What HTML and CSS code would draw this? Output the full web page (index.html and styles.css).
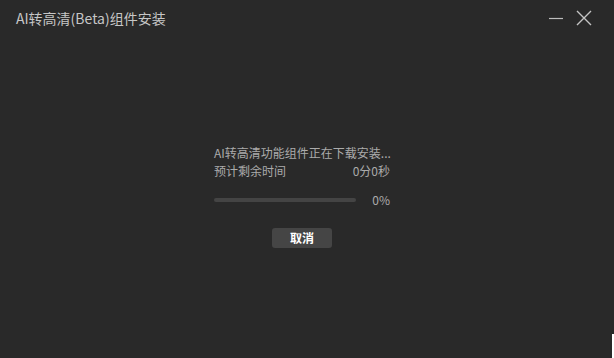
FILE: index.html
```html
<!DOCTYPE html>
<html lang="zh-CN">
<head>
<meta charset="utf-8">
<link rel="stylesheet" href="styles.css">
</head>
<body>
<div class="window">
  <div class="titlebar">
    <div class="title">AI转高清(Beta)组件安装</div>
    <div class="controls">
      <svg class="icon-min" width="15" height="15" viewBox="0 0 15 15"><line x1="0" y1="7.5" x2="14" y2="7.5" stroke="#bdbdbd" stroke-width="1.2"/></svg>
      <svg class="icon-close" width="16" height="16" viewBox="0 0 16 16"><path d="M1 1 L15 15 M15 1 L1 15" stroke="#c4c4c4" stroke-width="1.4" fill="none"/></svg>
    </div>
  </div>
  <div class="main">
    <div class="panel">
      <div class="line">AI转高清功能组件正在下载安装...</div>
      <div class="line split"><span>预计剩余时间</span><span>0分0秒</span></div>
      <div class="progress-row">
        <div class="bar"><div class="fill" style="width:0%"></div></div>
        <span class="pct">0%</span>
      </div>
      <div class="actions"><button class="btn">取消</button></div>
    </div>
  </div>
  <div class="grip"></div>
</div>
</body>
</html>
```
FILE: styles.css
```css
* { box-sizing: border-box; }
html, body { margin: 0; padding: 0; background: #ffffff; }
body {
  font-family: "Noto Sans CJK SC", "Noto Sans", sans-serif;
}
.window {
  position: relative;
  width: 614px;
  height: 358px;
  background: #292929;
  overflow: hidden;
}
.titlebar {
  height: 36px;
  display: flex;
  align-items: center;
  justify-content: space-between;
  padding: 0 22px 0 16px;
}
.title {
  font-size: 14px;
  color: #c6c6c6;
  line-height: 20px;
  margin-top: -1px;
}
.controls {
  display: flex;
  align-items: center;
  gap: 12px;
  margin-top: 0px;
}
.icon-min, .icon-close { display: block; }
.main {
  display: flex;
  justify-content: center;
  padding-top: 108px;
  padding-right: 10px;
}
.panel {
  width: 176px;
  font-size: 12px;
  color: #ababab;
}
.line {
  height: 18px;
  line-height: 18px;
  white-space: nowrap;
}
.split {
  display: flex;
  justify-content: space-between;
}
.progress-row {
  margin-top: 10px;
  height: 20px;
  display: flex;
  align-items: center;
  justify-content: space-between;
}
.bar {
  width: 142px;
  height: 4px;
  border-radius: 2px;
  background: #444444;
  overflow: hidden;
}
.fill { height: 100%; background: #3d8bff; }
.pct { line-height: 20px; color: #ababab; }
.actions {
  margin-top: 18px;
  display: flex;
  justify-content: center;
}
.btn {
  width: 60px;
  height: 20px;
  border: none;
  border-radius: 3px;
  background: #454545;
  color: #ffffff;
  font-family: inherit;
  font-size: 12px;
  font-weight: bold;
  line-height: 20px;
  padding: 0;
}
.grip {
  position: absolute;
  right: 0;
  bottom: 0;
  width: 2px;
  height: 24px;
  background: #ffffff;
}
```
